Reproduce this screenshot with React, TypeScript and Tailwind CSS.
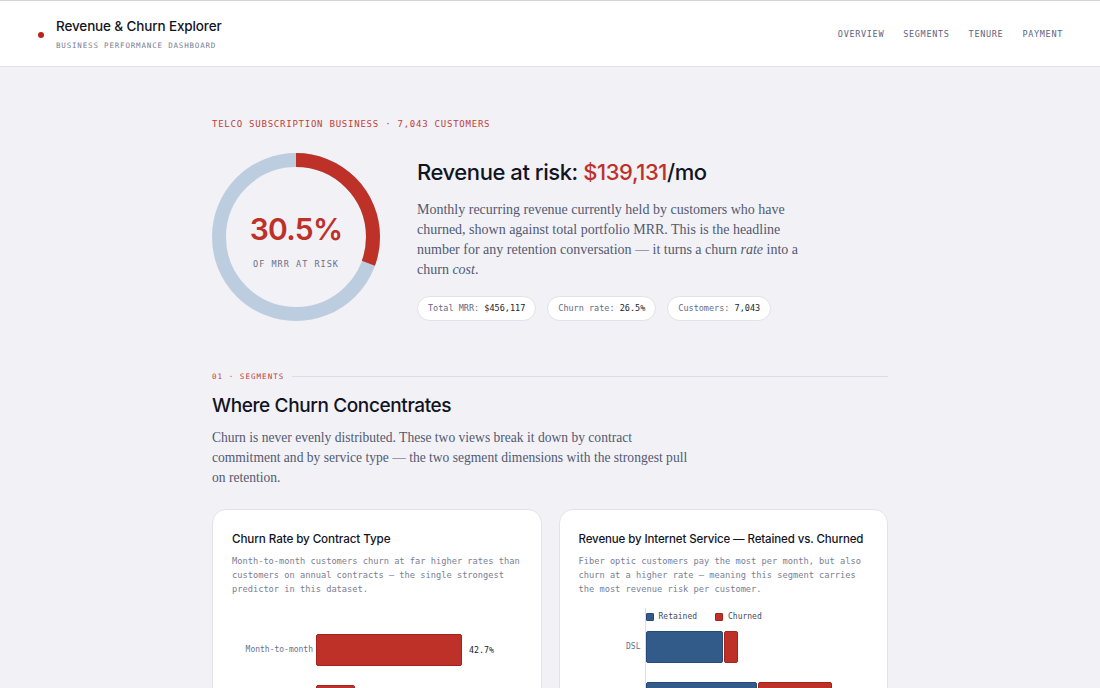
import React from "react";

const sans = "font-['Inter','Noto_Sans',sans-serif]";
const mono = "font-['DejaVu_Sans_Mono','Liberation_Mono',monospace]";
const serif = "font-['Liberation_Serif','DejaVu_Serif',serif]";

const contractRows = [
  { label: "Month-to-month", pct: 42.7 },
  { label: "One year", pct: 11.3 },
  { label: "Two year", pct: 2.8 },
];

const serviceRows = [
  { label: "DSL", kept: 77, lost: 14 },
  { label: "Fiber optic", kept: 111, lost: 74 },
  { label: "No internet", kept: 30, lost: 2 },
];

const Donut = () => {
  const r = 77;
  const c = 2 * Math.PI * r;
  const share = 0.305;
  return (
    <div className="relative w-[168px] h-[168px] shrink-0">
      <svg width="168" height="168" viewBox="0 0 168 168">
        <circle cx="84" cy="84" r={r} fill="none" stroke="#bccddf" strokeWidth="14" />
        <circle
          cx="84"
          cy="84"
          r={r}
          fill="none"
          stroke="#bd3129"
          strokeWidth="14"
          strokeDasharray={`${c * share} ${c}`}
          transform="rotate(-90 84 84)"
        />
      </svg>
      <div className="absolute inset-0 flex flex-col items-center pt-[61px]">
        <div className={`${sans} text-[30px] font-semibold text-[#bd3129] tracking-tight leading-[30px]`}>
          30.5%
        </div>
        <div className={`${mono} text-[8.5px] leading-[12px] tracking-[0.12em] text-[#6b7088] mt-[14px]`}>
          OF MRR AT RISK
        </div>
      </div>
    </div>
  );
};

const Chip = ({ k, v }: { k: string; v: string }) => (
  <div className={`${mono} text-[8.5px] h-[25px] px-[10px] flex items-center rounded-full bg-white border border-[#e1e2ea] text-[#666b82]`}>
    {k}&nbsp;<span className="text-[#1b1d2b]">{v}</span>
  </div>
);

const App = () => {
  return (
    <div className="min-h-screen bg-[#f1f1f6] border-t border-[#d4d4d8]">
      <header className="h-[66px] bg-white border-b border-[#e2e2ea] flex items-center justify-between pl-[38px] pr-[37px]">
        <div className="flex items-center gap-[12px] pt-[2px]">
          <div className="w-[6px] h-[6px] rounded-full bg-[#bd221c] mt-[1px]" />
          <div className="flex flex-col">
            <div className={`${sans} text-[13.5px] font-medium text-[#12141f] leading-[18px] tracking-[-0.01em]`}>
              Revenue &amp; Churn Explorer
            </div>
            <div className={`${mono} text-[7.5px] tracking-[0.11em] text-[#7a7e95] mt-[5px]`}>
              BUSINESS PERFORMANCE DASHBOARD
            </div>
          </div>
        </div>
        <nav className={`${mono} flex gap-[19px] text-[8.5px] tracking-[0.08em] text-[#5f6480] mt-[1px]`}>
          <span>OVERVIEW</span>
          <span>SEGMENTS</span>
          <span>TENURE</span>
          <span>PAYMENT</span>
        </nav>
      </header>

      <main className="w-[676px] mx-auto pt-[51px]">
        <div className={`${mono} text-[9px] tracking-[0.085em] text-[#c0403a]`}>
          TELCO SUBSCRIPTION BUSINESS · 7,043 CUSTOMERS
        </div>

        <section className="flex items-start gap-[37px] mt-[21px]">
          <Donut />
          <div className="flex flex-col pt-[5px]">
            <h1 className={`${sans} text-[22px] font-medium text-[#12141f] tracking-[-0.02em] leading-[28px]`}>
              Revenue at risk: <span className="text-[#bd3129]">$139,131</span>/mo
            </h1>
            <p className={`${serif} text-[14px] leading-[20px] text-[#525972] max-w-[385px] mt-[14px]`}>
              Monthly recurring revenue currently held by customers who have churned, shown against total portfolio MRR.
              This is the headline number for any retention conversation — it turns a churn <i>rate</i> into a churn{" "}
              <i>cost</i>.
            </p>
            <div className="flex gap-[11px] mt-[16px]">
              <Chip k="Total MRR:" v="$456,117" />
              <Chip k="Churn rate:" v="26.5%" />
              <Chip k="Customers:" v="7,043" />
            </div>
          </div>
        </section>

        <div className="flex items-center gap-[8px] mt-[50px]">
          <span className={`${mono} text-[7.5px] tracking-[0.14em] text-[#c0403a] whitespace-nowrap`}>01 · SEGMENTS</span>
          <div className="flex-1 h-px bg-[#dcdce4]" />
        </div>
        <h2 className={`${sans} text-[19px] font-medium text-[#12141f] tracking-[-0.02em] mt-[10px]`}>
          Where Churn Concentrates
        </h2>
        <p className={`${serif} text-[13.55px] leading-[20px] text-[#525972] max-w-[490px] mt-[8px]`}>
          Churn is never evenly distributed. These two views break it down by contract commitment and by service type —
          the two segment dimensions with the strongest pull on retention.
        </p>

        <div className="grid grid-cols-2 gap-[17px] mt-[21px]">
          <div className="bg-white border border-[#e2e2ea] rounded-[14px] pt-[21px] px-[19px] pb-[20px]">
            <div className={`${sans} text-[11.7px] font-medium text-[#12141f] tracking-[-0.01em] whitespace-nowrap`}>
              Churn Rate by Contract Type
            </div>
            <p className={`${mono} text-[8.7px] leading-[14px] text-[#7a7e95] mt-[5px]`}>
              Month-to-month customers churn at far higher rates than customers on annual contracts — the single strongest
              predictor in this dataset.
            </p>
            <div className="flex flex-col gap-[19px] mt-[38px]">
              {contractRows.map((row) => (
                <div key={row.label} className="flex items-center">
                  <div className={`${mono} w-[84px] text-right pr-[3px] text-[8px] text-[#6b7088]`}>{row.label}</div>
                  <div
                    className="h-[32px] bg-[#bd3129] border border-[#a8221c] rounded-[2px]"
                    style={{ width: row.pct * 3.42 }}
                  />
                  <div className={`${mono} text-[8.3px] text-[#1b1d2b] ml-[7px]`}>{row.pct}%</div>
                </div>
              ))}
            </div>
          </div>

          <div className="bg-white border border-[#e2e2ea] rounded-[14px] pt-[21px] px-[19px] pb-[20px]">
            <div className={`${sans} text-[11.5px] font-medium text-[#12141f] tracking-[-0.01em] whitespace-nowrap`}>
              Revenue by Internet Service — Retained vs. Churned
            </div>
            <p className={`${mono} text-[8.7px] leading-[14px] text-[#7a7e95] mt-[5px]`}>
              Fiber optic customers pay the most per month, but also churn at a higher rate — meaning this segment carries
              the most revenue risk per customer.
            </p>
            <div className="flex mt-[12px]">
              <div className="w-[66px] flex flex-col pt-[23px] gap-[19px]">
                {serviceRows.map((row) => (
                  <div key={row.label} className={`${mono} h-[32px] flex items-center justify-end pr-[4px] text-[8px] text-[#6b7088] whitespace-nowrap`}>
                    {row.label}
                  </div>
                ))}
              </div>
              <div className="flex-1 border-l border-[#dcdce4] flex flex-col">
                <div className={`${mono} flex items-center gap-[18px] h-[19px] text-[8px] text-[#444a60]`}>
                  <span className="flex items-center gap-[5px]">
                    <span className="w-[8px] h-[8px] bg-[#335b8a] border border-[#26497a] rounded-[1px]" />
                    Retained
                  </span>
                  <span className="flex items-center gap-[5px]">
                    <span className="w-[8px] h-[8px] bg-[#bd3129] border border-[#a8221c] rounded-[1px]" />
                    Churned
                  </span>
                </div>
                <div className="flex flex-col gap-[19px] mt-[4px]">
                  {serviceRows.map((row) => (
                    <div key={row.label} className="flex items-center gap-[1px] h-[32px]">
                      <div
                        className="h-full bg-[#335b8a] border border-[#26497a] rounded-[2px]"
                        style={{ width: row.kept }}
                      />
                      <div
                        className="h-full bg-[#bd3129] border border-[#a8221c] rounded-[2px]"
                        style={{ width: row.lost }}
                      />
                    </div>
                  ))}
                </div>
              </div>
            </div>
          </div>
        </div>
      </main>
    </div>
  );
};

export default App;
